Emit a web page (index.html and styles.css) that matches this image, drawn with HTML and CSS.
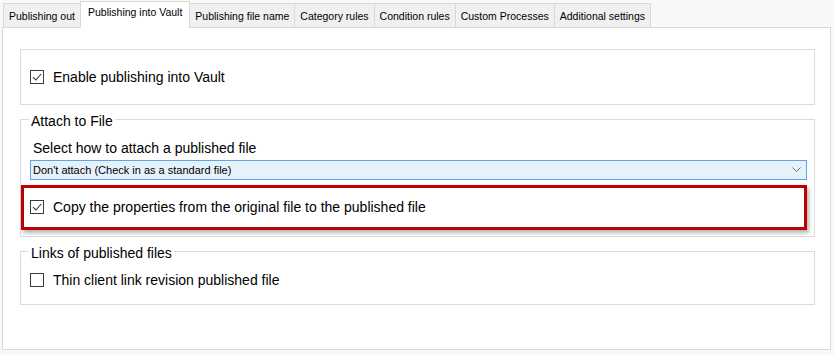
FILE: index.html
```html
<!DOCTYPE html>
<html lang="en">
<head>
  <meta charset="UTF-8" />
  <meta name="viewport" content="width=device-width, initial-scale=1.0" />
  <title>Publishing into Vault</title>
  <link rel="stylesheet" href="styles.css">
</head>
<body>
  <div class="tabs">
    <div class="tab">Publishing out</div>
    <div class="tab active">Publishing into Vault</div>
    <div class="tab">Publishing file name</div>
    <div class="tab">Category rules</div>
    <div class="tab">Condition rules</div>
    <div class="tab">Custom Processes</div>
    <div class="tab">Additional settings</div>
  </div>

  <div class="panel">
    <div class="group plain">
      <label class="check">
        <span class="box"><svg width="12" height="12" viewBox="0 0 12 12"><path d="M2 6.2 L4.8 9 L10.2 3" fill="none" stroke="#333" stroke-width="1.1"/></svg></span>
        Enable publishing into Vault
      </label>
    </div>

    <fieldset class="group">
      <legend>Attach to File</legend>
      <div class="field-label">Select how to attach a published file</div>
      <div class="select">
        <span>Don't attach (Check in as a standard file)</span>
        <svg width="9" height="6" viewBox="0 0 9 6"><polyline points="0.5,0.5 4.5,4.5 8.5,0.5" fill="none" stroke="#707070" stroke-width="1"/></svg>
      </div>
      <div class="highlight">
        <label class="check">
          <span class="box"><svg width="12" height="12" viewBox="0 0 12 12"><path d="M2 6.2 L4.8 9 L10.2 3" fill="none" stroke="#333" stroke-width="1.1"/></svg></span>
          Copy the properties from the original file to the published file
        </label>
      </div>
    </fieldset>

    <fieldset class="group links">
      <legend>Links of published files</legend>
      <label class="check">
        <span class="box"></span>
        Thin client link revision published file
      </label>
    </fieldset>
  </div>
</body>
</html>
```

FILE: styles.css
```css
* { box-sizing: border-box; }
body { margin: 0; background: #f8f8f8; font-family: "Liberation Sans", Arial, sans-serif; color: #000; }

.tabs { display: flex; align-items: flex-end; height: 27px; padding-left: 3px; }
.tab { height: 24px; padding: 0 5px; line-height: 24px; font-size: 10.5px; background: #f0f0f0; border: 1px solid #d9d9d9; border-bottom: none; margin-left: -1px; white-space: nowrap; }
.tab:first-child { margin-left: 0; }
.tab.active { height: 27px; line-height: 20px; padding: 0 7px; background: #fff; margin-bottom: -1px; position: relative; z-index: 1; }

.panel { height: 323px; margin: 0 3px 0 2px; background: #fff; border: 1px solid #d9d9d9; padding: 21px 15px 0 17px; }

.group { border: 1px solid #dcdcdc; margin: 0; padding: 0 7px 0 9px; }
.group.plain { height: 56px; display: flex; align-items: center; padding-bottom: 1px; }
.group legend { font-size: 14px; line-height: 16px; padding: 4px 2px 0; margin-left: -1px; }
fieldset.group { margin-top: 4px; padding-bottom: 6px; }
fieldset.links { padding-bottom: 14px; }
.links .check { margin-top: 9px; }

.check { display: flex; align-items: center; gap: 9px; font-size: 14px; line-height: 20px; }
.box { width: 14px; height: 14px; border: 1px solid #3c3c3c; background: #fff; display: flex; align-items: center; justify-content: center; flex: none; }

.field-label { font-size: 14px; line-height: 17px; margin-top: 11px; padding-left: 3px; }
.select { height: 20px; margin-top: 3px; background: #e5f1fb; border: 1px solid #5ea5e8; display: flex; align-items: center; justify-content: space-between; padding: 0 5px 0 2px; font-size: 11px; }

.highlight { margin: 5px 0 0 -9px; height: 45px; border: 3px solid #c00000; box-shadow: 2px 3px 4px rgba(0, 0, 0, 0.3); display: flex; align-items: center; padding: 0 0 1px 6px; }
```
